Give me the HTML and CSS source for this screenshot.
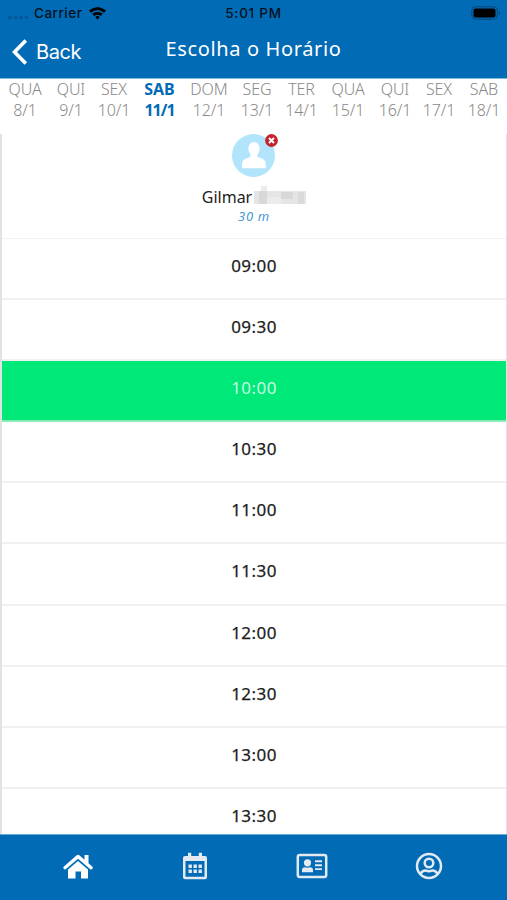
FILE: index.html
```html
<!DOCTYPE html>
<html lang="pt-BR">
<head>
<meta charset="utf-8">
<title>Escolha o Horário</title>
<link rel="stylesheet" href="styles.css">
</head>
<body>
<div class="app">
  <header class="header">
    <div class="status">
      <div class="carrier"><span class="dots"><i></i><i></i><i></i><i></i></span><span class="carrier-name">Carrier</span>
        <svg class="wifi" width="19" height="14" viewBox="0 0 19 14"><path d="M1 4.5Q9.500-2.500 18 4.500L16 6.700Q9.500 1.300 3 6.700ZM4.200 7.800Q9.500 3.600 14.800 7.800L12.700 10Q9.500 7.500 6.300 10ZM7.200 11Q9.500 9.200 11.800 11L9.500 13.500Z"/></svg>
      </div>
      <div class="clock">5:01 PM</div>
      <svg class="battery" width="31" height="14" viewBox="0 0 31 14"><rect x=".8" y=".8" width="25.500" height="12.400" rx="3.500" fill="none" stroke="#064578" stroke-width="1"/><rect x="2.500" y="2.500" width="22" height="9" rx="2" fill="#000"/><path d="M27.700 4.700Q30.500 7 27.700 9.300Z" fill="#064578"/></svg>
    </div>
    <div class="nav">
      <div class="back"><svg width="16" height="26" viewBox="0 0 16 26"><path d="M13.800 1.500 2.500 13 13.800 24.500" fill="none" stroke="#fff" stroke-width="3.700"/></svg><span>Back</span></div>
      <h1 class="title">Escolha o Horário</h1>
    </div>
  </header>
  <div class="days">
    <div class="day"><span>QUA</span><span>8/1</span></div>
    <div class="day"><span>QUI</span><span>9/1</span></div>
    <div class="day"><span>SEX</span><span>10/1</span></div>
    <div class="day active"><span>SAB</span><span>11/1</span></div>
    <div class="day"><span>DOM</span><span>12/1</span></div>
    <div class="day"><span>SEG</span><span>13/1</span></div>
    <div class="day"><span>TER</span><span>14/1</span></div>
    <div class="day"><span>QUA</span><span>15/1</span></div>
    <div class="day"><span>QUI</span><span>16/1</span></div>
    <div class="day"><span>SEX</span><span>17/1</span></div>
    <div class="day"><span>SAB</span><span>18/1</span></div>
  </div>
  <main class="schedule">
    <section class="person">
      <div class="avatar">
        <svg width="43" height="43" viewBox="0 0 43 43"><circle cx="21.500" cy="21.500" r="21.500" fill="#b2e4fb"/><ellipse cx="22" cy="14.800" rx="5.700" ry="6.800" fill="#fff"/><path d="M10 34.300V30.500Q10 25 16 23.700L18.500 23V19H25.500V23L28 23.700Q33.800 25 33.800 30.500V34.300Z" fill="#fff"/></svg>
        <svg class="remove" width="13" height="13" viewBox="0 0 13 13"><circle cx="6.500" cy="6.500" r="6.400" fill="#c4242d"/><path d="M4 4 9 9M9 4 4 9" stroke="#fff" stroke-width="1.900"/></svg>
      </div>
      <div class="name"><span>Gilmar</span>
        <svg width="52" height="19" viewBox="0 0 52 19"><path fill="#e5e5e5" d="M0 5H52V18H0Z"/><path fill="#d8d8d8" d="M5 5H13V18H5ZM27 6H39V13H27Z"/><path fill="#ebebeb" d="M7 0H13V5H7ZM13 11H27V18H13Z"/><path fill="#dadada" d="M44 6H50V18H44Z"/></svg>
      </div>
      <div class="duration">30 m</div>
    </section>
    <div class="slot">09:00</div>
    <div class="slot">09:30</div>
    <div class="slot selected">10:00</div>
    <div class="slot">10:30</div>
    <div class="slot">11:00</div>
    <div class="slot">11:30</div>
    <div class="slot">12:00</div>
    <div class="slot">12:30</div>
    <div class="slot">13:00</div>
    <div class="slot">13:30</div>
  </main>
  <nav class="tabs">
    <svg width="30" height="25" viewBox="0 0 30 25"><path fill="#fff" d="M1 12.400 13.700 1.200Q15 .2 16.300 1.200L21.500 5.700V1H25.500V9.200L29.200 12.400Q30.500 13.500 29.300 14.800T27 15L15 4.700 3 15Q1.900 15.900.8 14.700T1 12.400ZM5 15.500 15 7 25 15.500V24.500H18V17.500H12.500V24.500H5Z"/></svg>
    <svg width="26" height="28" viewBox="0 0 26 28"><path fill="#e3eaf2" fill-rule="evenodd" d="M3 4H6V.7H9.200V4H16.800V.7H20V4H23Q25 4 25 6V25Q25 27.300 23 27.300H3Q1 27.300 1 25V6Q1 4 3 4ZM3.500 9V24.800H22.500V9Z"/><path fill="#e3eaf2" d="M6.500 12.500h3.400v3.400H6.500zm5 0h3.400v3.400h-3.400zm5 0h3.400v3.400h-3.400zm-10 5h3.400v3.400H6.500zm5 0h3.400v3.400h-3.400zm5 0h3.400v3.400h-3.400z"/></svg>
    <svg width="32" height="26" viewBox="0 0 32 26"><rect x="1.800" y="2" width="28.400" height="22" rx="2" fill="none" stroke="#e3eaf2" stroke-width="2.500"/><circle cx="11.500" cy="9.800" r="3.600" fill="#e3eaf2"/><path fill="#e3eaf2" d="M6 19.300V17.500Q6 14.300 9 14.300Q11.500 15.200 14 14.300Q17 14.300 17 17.500V19.300Z"/><path d="M19 8.300h7M19 12.200h7M19 16.100h7" stroke="#e3eaf2" stroke-width="1.900"/></svg>
    <svg width="28" height="28" viewBox="0 0 28 28"><g fill="none" stroke="#e3eaf2" stroke-width="2.500"><circle cx="14" cy="14" r="12"/><circle cx="14" cy="11" r="4.300"/><path d="M5.500 21.500Q7.500 18.400 10.300 18.400Q14 20 17.700 18.400Q20.500 18.400 22.500 21.500"/></g></svg>
  </nav>
</div>
</body>
</html>
```
FILE: styles.css
```css
* { box-sizing: border-box; }
body { margin: 0; background: #fff; font-family: "Noto Sans", sans-serif; }
svg { display: block; flex: none; }
.app { width: 507px; height: 900px; display: flex; flex-direction: column; overflow: hidden; }
.header { height: 79px; background: #026bb6; border-bottom: 1px solid #80b9df; flex: none; }
.status { height: 26px; display: grid; grid-template-columns: 1fr auto 1fr; align-items: center; padding: 0 5px 0 8px; font: 500 13.5px/26px Inter, sans-serif; color: #03111d; }
.carrier { display: flex; align-items: center; }
.carrier-name { width: 49px; margin: 0 5px 0 6px; letter-spacing: .5px; }
.dots { display: flex; gap: 2px; padding-top: 8px; }
.dots i { width: 3.500px; height: 3px; border-radius: 50%; background: #075591; }
.clock { letter-spacing: .75px; margin-right: 3px; }
.battery { justify-self: end; }
.nav { height: 52px; display: grid; grid-template-columns: 1fr auto 1fr; color: #fff; }
.back { display: flex; align-items: center; gap: 8px; padding-left: 12px; font: 400 20px/26px Inter, sans-serif; letter-spacing: -.4px; }
.title { margin: 0; font-size: 20px; line-height: 45px; font-weight: 400; letter-spacing: .63px; }
.days { height: 55px; flex: none; display: grid; grid-template-columns: 48px 44px 42px 49px 50px 46px 43px 50px 44px 44px 46px; padding-left: 1px; color: #898989; font-size: 16px; line-height: 20.500px; text-align: center; }
.day { display: flex; flex-direction: column; align-items: center; white-space: nowrap; font-weight: 300; letter-spacing: -.1px; }
.active { color: #026bb6; font-weight: 700; letter-spacing: 0; }
.active span + span { letter-spacing: -1px; }
.schedule { height: 700px; overflow: hidden; border: solid #e2e2e2; border-width: 0 1px 0 2px; flex: none; }
.person { height: 105px; display: flex; flex-direction: column; align-items: center; border-bottom: 1px solid #f3f3f3; }
.avatar { position: relative; width: 43px; height: 43px; margin-right: 1px; }
.remove { position: absolute; right: -3px; top: 0; }
.name { display: flex; align-items: center; height: 24px; margin-top: 8px; font-size: 16px; line-height: 24px; color: #222; gap: 2px; }
.name svg { margin-top: -4px; }
.name span { letter-spacing: 0; }
.duration { font-size: 13px; line-height: 14px; font-style: italic; color: #4998d2; letter-spacing: .7px; }
.slot { height: 61.100px; border-bottom: 2px solid #f0f0f0; text-align: center; font-size: 17px; line-height: 54px; font-weight: 400; color: #1c1c1c; -webkit-text-stroke: .25px currentColor; letter-spacing: .45px; }
.selected { background: #00e978; color: #c6ffe1; border-bottom-color: #8ceab8; -webkit-text-stroke: 0; }
.tabs { height: 66px; border-top: 1px solid #67a7d4; background: #026bb6; display: grid; grid-template-columns: repeat(4, 117px); justify-content: center; align-items: center; justify-items: center; padding-bottom: 3px; }
```
